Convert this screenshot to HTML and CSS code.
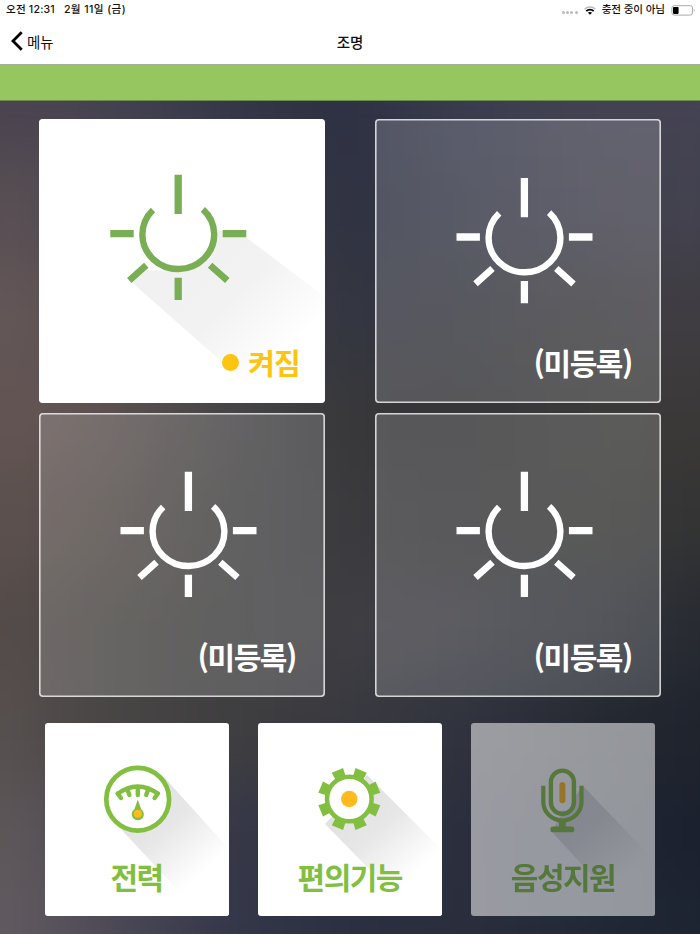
FILE: index.html
```html
<!DOCTYPE html>
<html lang="ko">
<head>
<meta charset="utf-8">
<title>조명</title>
<link rel="stylesheet" href="styles.css">
</head>
<body>
<svg class="defs" width="0" height="0" aria-hidden="true">
  <defs>
    <linearGradient id="lampFade" gradientUnits="userSpaceOnUse" x1="130" y1="110" x2="250" y2="230">
      <stop offset="0" stop-color="#f0f0f0"/><stop offset=".55" stop-color="#f2f2f2"/><stop offset="1" stop-color="#fff"/>
    </linearGradient>
    <linearGradient id="smallFade" gradientUnits="userSpaceOnUse" x1="95" y1="80" x2="158" y2="149">
      <stop offset="0" stop-color="#e2e2e2"/><stop offset=".4" stop-color="#e7e7e7"/><stop offset="1" stop-color="#fff"/>
    </linearGradient>
    <linearGradient id="micFade" gradientUnits="userSpaceOnUse" x1="95" y1="80" x2="158" y2="149">
      <stop offset="0" stop-color="#dcdce0"/><stop offset=".4" stop-color="#e4e4e7"/><stop offset="1" stop-color="#fff"/>
    </linearGradient>
    <g id="lamp" fill="none" stroke="currentColor" stroke-width="7.3">
      <path d="M139.2 55.7V95M71.3 114.7H94.7M183.7 114.7H207.3M139.2 158.7V181"/>
      <path stroke-width="6.7" d="M107.3 146.2L90.3 161.4M171.1 146.2L188.3 161.6"/>
      <path stroke-width="6.4" d="M114 91A35.9 34.5 0 1 0 163.9 90.4"/>
    </g>
  </defs>
</svg>

<div class="app">
  <header class="top">
    <div class="status">
      <span class="time">오전 12:31</span><span class="date">2월 11일 (금)</span>
      <span class="signal"><i></i><i></i><i></i><i></i></span>
      <svg class="wifi" width="12" height="9" viewBox="0 0 12 9">
        <path d="M.5 3.2C3.5.2 8.5.2 11.5 3.2" fill="none" stroke="#bbb" stroke-width="1.4"/>
        <path d="M2.3 5.2C4.3 3.1 7.7 3.1 9.7 5.2" fill="none" stroke="#000" stroke-width="1.8"/>
        <path d="M6 8.8L3.9 6.7C5.1 5.7 6.9 5.7 8.1 6.7Z"/>
      </svg>
      <span class="charge">충전 중이 아님</span>
      <svg class="battery" width="25" height="11" viewBox="0 0 25 11">
        <rect x=".9" y=".7" width="20.6" height="9.4" rx="2.2" fill="none" stroke="#aaa"/>
        <rect x="2" y="1.9" width="5.6" height="7" rx=".8"/>
        <path d="M22.8 3.7Q24.6 5.4 22.8 7.2Z" fill="#aaa"/>
      </svg>
    </div>
    <nav class="nav">
      <a class="back"><svg width="12" height="20" viewBox="0 0 12 20"><path d="M10.7 1.2L2 10L10.7 18.8" fill="none" stroke="#000" stroke-width="2.8"/></svg>메뉴</a>
      <h1>조명</h1>
    </nav>
  </header>
  <div class="strip"></div>

  <main class="scene">
    <div class="backdrop" aria-hidden="true">
      <b class="r1"></b><b class="r2"></b><b class="r3"></b><b class="r4"></b><b class="r5"></b><b class="r6"></b><b class="r7"></b><b class="r8"></b><b class="r9"></b>
    </div>
    <section class="lights">
      <div class="light on">
        <svg class="art" viewBox="0 0 286 284">
          <path d="M179 111L207.3 118.5L286 178V280H225L93.3 163.7L108 151L140 152L172 140Z" fill="url(#lampFade)"/>
          <use href="#lamp"/>
        </svg>
        <span class="label"><i class="dot"></i>켜짐</span>
      </div>
      <div class="light">
        <svg class="art" viewBox="0 0 286 284"><use href="#lamp" x="10.2" y="3.3"/></svg>
        <span class="label">(미등록)</span>
      </div>
      <div class="light">
        <svg class="art" viewBox="0 0 286 284"><use href="#lamp" x="10.2" y="3"/></svg>
        <span class="label">(미등록)</span>
      </div>
      <div class="light">
        <svg class="art" viewBox="0 0 286 284"><use href="#lamp" x="10.2" y="3"/></svg>
        <span class="label">(미등록)</span>
      </div>
    </section>

    <section class="menu">
      <div class="item">
        <svg class="art" viewBox="0 0 184 193">
          <path d="M119 54L184 126V193H157L73 103L93 76Z" fill="url(#smallFade)"/>
          <circle cx="92.7" cy="76.2" r="31.4" fill="#fff" stroke="#82bf41" stroke-width="4.7"/>
          <g fill="none" stroke="#82bf41">
            <path d="M72 71.2Q92.8 55.8 113.6 71.2" stroke-width="4.4"/>
            <path d="M72.6 70.5L76 75M82.6 67L84.4 72M92.8 64V72M103 67L101.2 72M113 70.5L109.6 75" stroke-width="4.4" stroke-linecap="round"/>
          </g>
          <path d="M92.8 76.5L96.2 86.2A6.1 6.1 0 1 1 89.4 86.2Z" fill="#82bf41"/>
          <circle cx="92.8" cy="90.8" r="4" fill="#febb1e"/>
        </svg>
        <span class="label">전력</span>
      </div>
      <div class="item">
        <svg class="art" viewBox="0 0 184 193">
          <path d="M109 52L184 127V193H157L67 101L91 76Z" fill="url(#smallFade)"/>
          <g transform="translate(91.3 76)">
            <circle r="22.3" fill="#fff" stroke="#82bf41" stroke-width="4.6"/>
            <g fill="#82bf41" transform="rotate(22.5)">
              <path id="tooth" d="M-6.1 -31H6.1L5.3 -22H-5.3Z"/>
              <use href="#tooth" transform="rotate(45)"/><use href="#tooth" transform="rotate(90)"/><use href="#tooth" transform="rotate(135)"/><use href="#tooth" transform="rotate(180)"/><use href="#tooth" transform="rotate(225)"/><use href="#tooth" transform="rotate(270)"/><use href="#tooth" transform="rotate(315)"/>
            </g>
            <circle r="8.3" fill="#febb1e"/>
          </g>
        </svg>
        <span class="label">편의기능</span>
      </div>
      <div class="item off">
        <svg class="art" viewBox="0 0 184 193">
          <path d="M112 63L184 138V193H158L81 109L91 90Z" fill="url(#micFade)"/>
          <path d="M72.3 62.7V79A19.1 18.5 0 0 0 110.5 79V62.7" fill="none" stroke="#82bf41" stroke-width="4.2"/>
          <rect x="79.9" y="47.6" width="23" height="43.2" rx="11.5" fill="#fff" stroke="#82bf41" stroke-width="4.4"/>
          <rect x="88.4" y="59" width="6" height="21.3" rx="3" fill="#febb1e"/>
          <path d="M88 98H94.8V103.5H100.5A2.8 2.8 0 0 1 100.5 109.3H82.2A2.8 2.8 0 0 1 82.2 103.5H88Z" fill="#82bf41"/>
        </svg>
        <span class="label">음성지원</span>
      </div>
    </section>
  </main>
</div>
</body>
</html>
```

FILE: styles.css
```css
* { box-sizing: border-box; }
body { margin: 0; font-family: Inter, "Noto Sans CJK KR", sans-serif; color: #111; }
.defs { display: block; }
.app { width: 700px; height: 934px; display: flex; flex-direction: column; overflow: hidden; }

.top { height: 65px; background: #fff; border-bottom: 1px solid #a5b095; flex: none; }
.status { display: flex; align-items: center; height: 20px; padding: 0 4px 0 6px; font-size: 10.6px; font-weight: 500; line-height: 20px; white-space: nowrap; }
.time { margin-right: 9px; letter-spacing: .18px; }
.date { letter-spacing: .4px; }
.signal { display: flex; gap: 1.2px; margin: 5px 6px 0 auto; }
.signal i { width: 3px; height: 3px; border-radius: 50%; background: #bbb; }
.wifi { margin-right: 6px; }
.charge { margin-right: 6px; letter-spacing: -.1px; }
.nav { display: grid; grid-template-columns: 1fr auto 1fr; align-items: center; height: 42px; padding: 0 11px; }
.back { display: flex; align-items: center; gap: 4px; font-size: 14.5px; }
.nav h1 { margin: 0; font-size: 14.5px; font-weight: 500; letter-spacing: -.2px; }
.strip { height: 36px; flex: none; background: #95c660; border-bottom: 1px solid #6d8b50; }

.scene { position: relative; flex: 1; overflow: hidden; background: #38383d; padding: 18px 39px 0; }
.backdrop { position: absolute; inset: -50px -70px -60px; display: flex; flex-direction: column; filter: blur(32px); }
.backdrop b { display: block; flex: 1; }
.r1 { background: linear-gradient(90deg, #4b4450 8%, #474452 20%, #36384a 34%, #2d3042 50%, #3a3d4f 63%, #444353 79%, #454353 92%); }
.r2 { background: linear-gradient(90deg, #5a4f54 8%, #504a52 20%, #3e3e48 34%, #2e3140 50%, #373a49 63%, #41404d 79%, #43424f 92%); }
.r3 { background: linear-gradient(90deg, #655859 8%, #5c5151 16%, #4a4646 30%, #323541 49%, #35373f 60%, #3c3b3f 79%, #403e43 92%); }
.r4 { background: linear-gradient(90deg, #635553 8%, #5f5351 18%, #444345 37%, #38383b 49%, #353538 60%, #3a3a39 79%, #3b3938 92%); }
.r5 { background: linear-gradient(90deg, #5d514f 8%, #584e4a 16%, #434241 34%, #3c3c40 47%, #38383b 58%, #383836 82%, #333334 92%); }
.r6 { background: linear-gradient(90deg, #564c4a 8%, #4d4946 16%, #41403f 32%, #3e3e43 50%, #3b3b42 63%, #30333a 82%, #262930 92%); }
.r7 { background: linear-gradient(90deg, #585150 8%, #4b4747 18%, #403f40 34%, #38383f 50%, #2f323d 65%, #22272f 82%, #1e232d 92%); }
.r8 { background: linear-gradient(90deg, #605859 8%, #55505a 16%, #363849 34%, #2f3240 52%, #2b2e3d 64%, #1f2633 80%, #1b202e 92%); }
.r9 { background: linear-gradient(90deg, #645c62 8%, #544f5a 18%, #33374a 36%, #2b2e3e 52%, #2a2e3c 66%, #222936 80%, #1c2432 92%); }

.art { position: absolute; inset: 0; width: 100%; height: 100%; }
.lights { position: relative; display: grid; grid-template-columns: 286px 286px; justify-content: space-between; row-gap: 9.5px; }
.light { position: relative; height: 284px; border-radius: 4px; background: rgba(255,255,255,.17); color: #fff; box-shadow: inset 0 0 0 1.6px rgba(255,255,255,.75); display: flex; justify-content: flex-end; align-items: flex-end; padding: 0 29px 20px; }
.light.on { background: #fff; color: #7aae54; padding-right: 25px; }
.light .label { position: relative; display: flex; align-items: center; font-size: 30px; font-weight: 700; line-height: 42px; letter-spacing: -1.4px; font-family: "Noto Sans CJK KR", sans-serif; }
.light.on .label { color: #fec412; font-size: 29px; letter-spacing: -.8px; }
.dot { width: 17px; height: 17px; border-radius: 50%; background: #fec412; margin-right: 9px; }

.menu { position: relative; display: flex; justify-content: space-between; padding: 0 6px 0 5.5px; margin-top: 26.5px; }
.item { position: relative; width: 184px; height: 193px; border-radius: 3px; overflow: hidden; background: #fff; color: #82bf41; display: flex; justify-content: center; align-items: flex-end; padding-bottom: 19px; }
.item.off { opacity: .52; }
.item .label { position: relative; font: 700 30px/42px "Noto Sans CJK KR", sans-serif; letter-spacing: -1.5px; }
```
